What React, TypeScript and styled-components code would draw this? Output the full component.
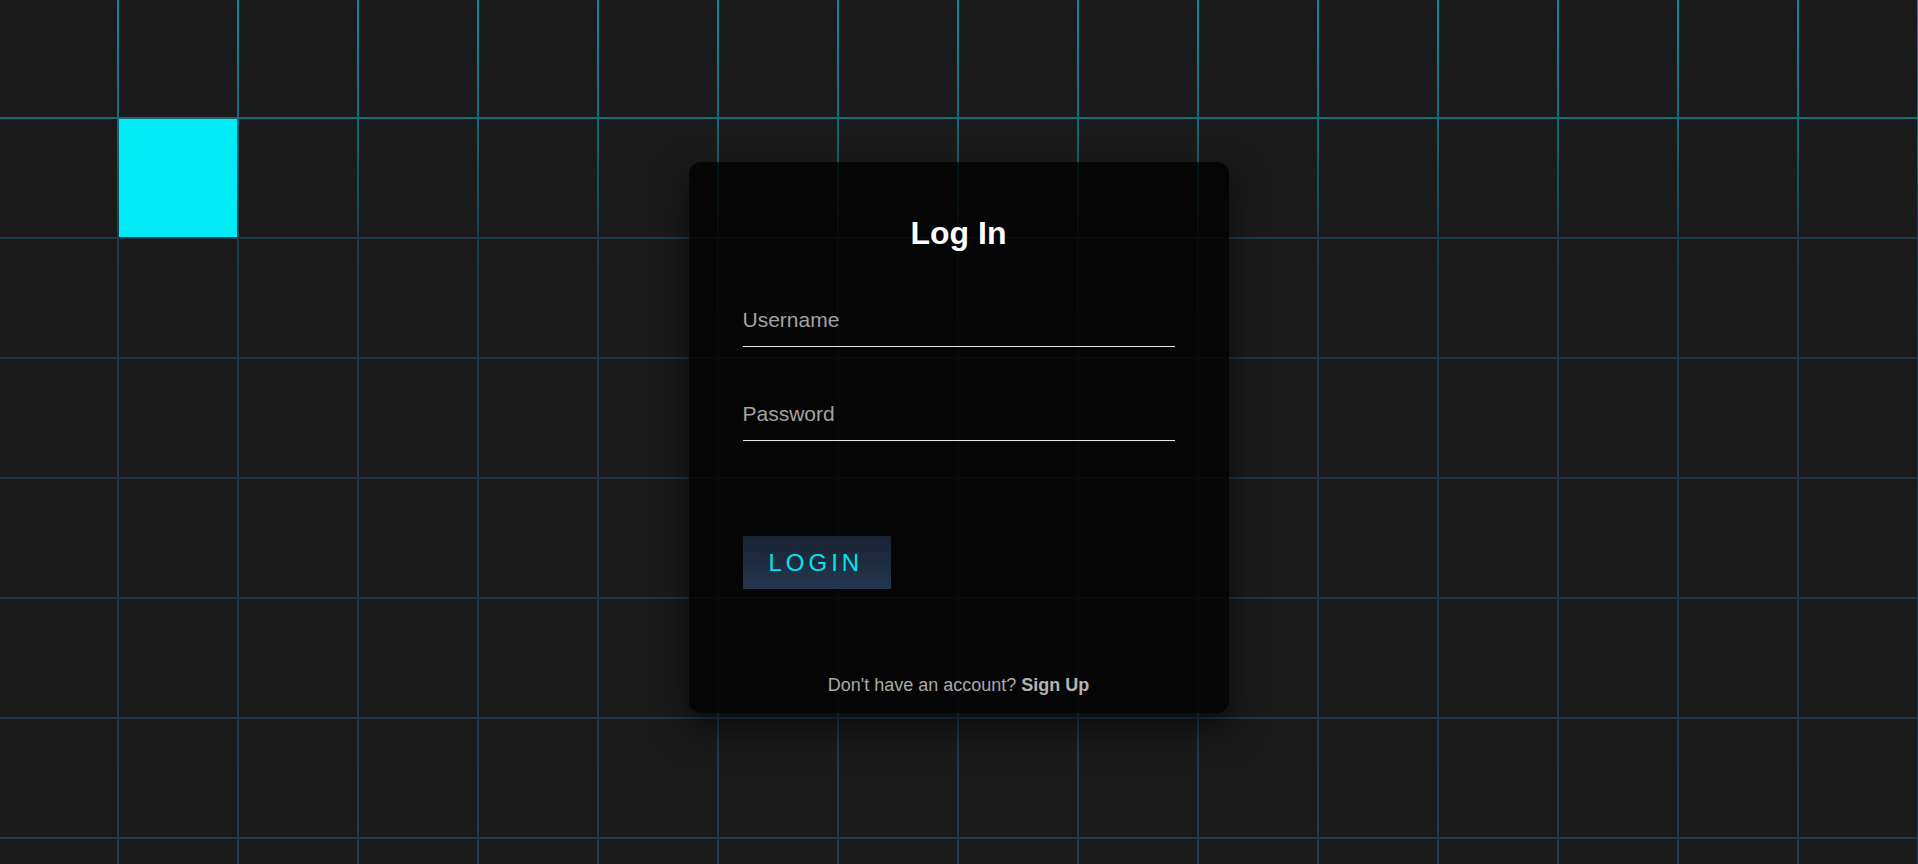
import React from "react";
import styled, { createGlobalStyle } from "styled-components";

const GlobalStyle = createGlobalStyle`
  html, body {
    margin: 0;
    padding: 0;
    background: #1a1a1a;
    overflow: hidden;
  }
  * { box-sizing: border-box; }
`;

const Stage = styled.main`
  display: grid;
  width: 100vw;
  height: 100vh;
  overflow: hidden;
  font-family: "Liberation Sans", Arial, sans-serif;
`;

const GridLayer = styled.div`
  grid-area: 1 / 1;
  display: grid;
  grid-template-columns: repeat(16, 118px);
  grid-auto-rows: 118px;
  gap: 2px;
  margin: -1px 0 0 -1px;
  width: 1920px;
  height: 958px;
  background: linear-gradient(
    to bottom,
    #0f8a9c 0px,
    #136b7b 118px,
    #1b3c4f 238px,
    #1f3349 358px,
    #21344d 600px,
    #233954 864px,
    #243a56 958px
  );
`;

const Cell = styled.span<{ $active?: boolean }>`
  display: block;
  background: ${(p) => (p.$active ? "#00ebf5" : "#1a1a1a")};
`;

const Card = styled.section`
  grid-area: 1 / 1;
  justify-self: center;
  align-self: start;
  position: relative;
  z-index: 2;
  margin: 162px 2px 0 0;
  width: 540px;
  padding: 53px 0 18px;
  display: flex;
  flex-direction: column;
  align-items: center;
  background: rgba(0, 0, 0, 0.8);
  border-radius: 12px;
  box-shadow: 0 15px 35px rgba(0, 0, 0, 0.55);
`;

const Title = styled.h2`
  margin: 0;
  font-size: 32px;
  line-height: 36px;
  font-weight: 700;
  color: #ffffff;
`;

const Form = styled.form`
  width: 80%;
  margin-top: 47px;
  display: flex;
  flex-direction: column;
  align-items: flex-start;
`;

const Field = styled.input<{ $gap?: number }>`
  width: 100%;
  margin: ${(p) => p.$gap ?? 0}px 0 0;
  padding: 10px 0 14px;
  font-family: "Liberation Sans", Arial, sans-serif;
  font-size: 21px;
  line-height: 24px;
  color: #ffffff;
  background: transparent;
  border: none;
  border-bottom: 1px solid #e8e8e8;
  border-radius: 0;
  outline: none;

  &::placeholder {
    color: #a3a3a3;
    opacity: 1;
  }
`;

const LoginButton = styled.button`
  margin-top: 95px;
  height: 53px;
  width: 148px;
  padding: 0 0 0 26px;
  text-align: left;
  font-family: "Liberation Sans", Arial, sans-serif;
  font-size: 24px;
  letter-spacing: 4px;
  color: #00e5f0;
  background: linear-gradient(to bottom, #192232, #24374f);
  border: none;
  cursor: pointer;
`;

const Footer = styled.p`
  margin: 86px 0 0;
  font-size: 18px;
  line-height: 20px;
  color: #aaaaaa;
`;

const SignUp = styled.a`
  font-weight: 700;
  color: #b4b4b4;
  text-decoration: none;
`;

const COLS = 16;
const ROWS = 8;

export default function App() {
  const cells = Array.from({ length: COLS * ROWS }, (_, i) => i);
  return (
    <>
      <GlobalStyle />
      <Stage>
        <GridLayer>
          {cells.map((i) => (
            <Cell key={i} $active={i === COLS + 1} />
          ))}
        </GridLayer>
        <Card>
          <Title>Log In</Title>
          <Form onSubmit={(e) => e.preventDefault()}>
            <Field type="text" placeholder="Username" />
            <Field type="password" placeholder="Password" $gap={45} />
            <LoginButton type="submit">LOGIN</LoginButton>
          </Form>
          <Footer>
            Don't have an account? <SignUp href="#">Sign Up</SignUp>
          </Footer>
        </Card>
      </Stage>
    </>
  );
}
